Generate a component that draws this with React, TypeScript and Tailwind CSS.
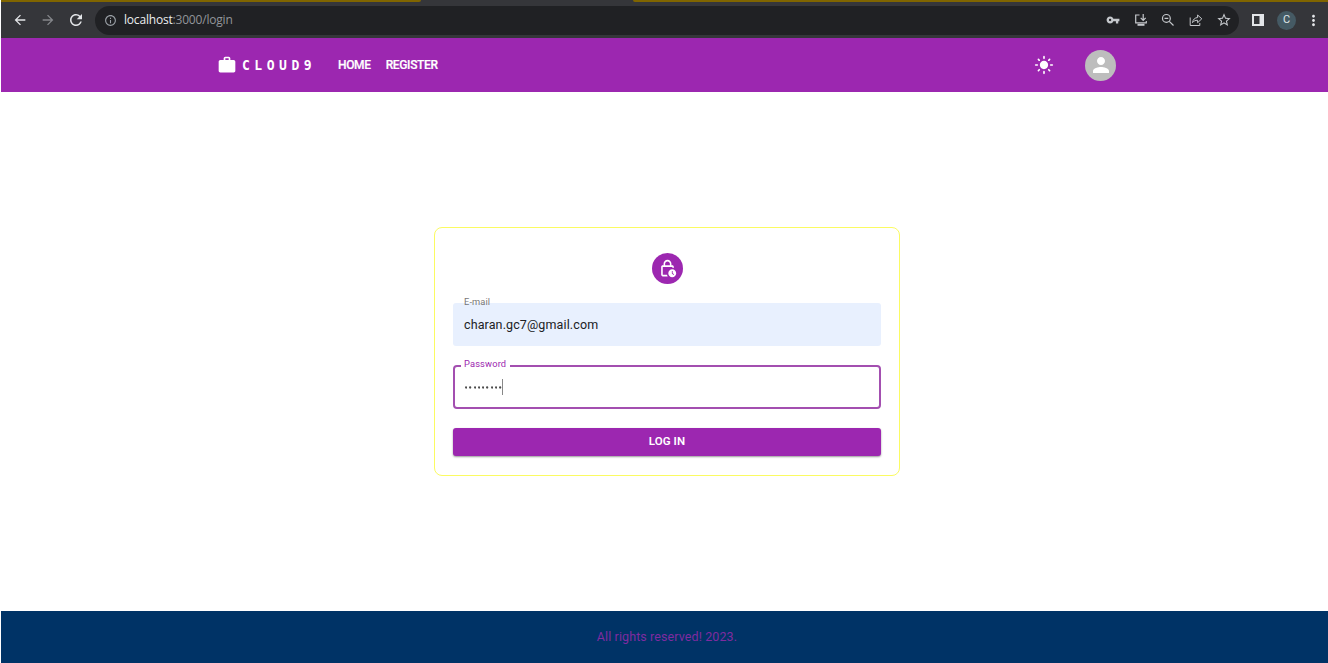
import type { ReactNode } from "react";
import {
  MdArrowBack,
  MdArrowForward,
  MdRefresh,
  MdInfoOutline,
  MdVpnKey,
  MdStarBorder,
  MdMoreVert,
  MdWork,
  MdLightMode,
  MdPerson,
  MdOutlineLockClock,
} from "react-icons/md";

function LineIcon({ children, className }: { children: ReactNode; className: string }) {
  return (
    <svg
      width="14"
      height="14"
      viewBox="0 0 14 14"
      fill="none"
      stroke="currentColor"
      strokeWidth="1.2"
      className={className}
    >
      {children}
    </svg>
  );
}

function TabStrip() {
  return (
    <div className="flex h-[2px] justify-between">
      <div className="w-[420px] rounded-br-[4px] bg-[#806500]" />
      <div className="w-[695px] rounded-bl-[4px] bg-[#806500]" />
    </div>
  );
}

function BrowserBar() {
  return (
    <div className="h-[38px] bg-[#35363a]">
      <TabStrip />
      <div className="flex h-9 items-center text-[#e4e6e9]">
        <MdArrowBack size={16} className="ml-[11px]" />
        <MdArrowForward size={16} className="ml-3 text-[#85878b]" />
        <MdRefresh size={18} className="ml-[11px]" />
        <div className="ml-[10px] flex h-[29px] w-[1144px] items-center rounded-full bg-[#202124] text-[#c5c8cc]">
          <MdInfoOutline size={13} className="ml-[9px] text-[#9aa0a6]" />
          <span className="ml-[7px] font-['Open_Sans',sans-serif] text-[12px] leading-4 tracking-[-0.19px] text-[#92959a]">
            <span className="text-[#eceef0]">localhost</span>:3000/login
          </span>
          <MdVpnKey size={14} className="ml-auto" />
          <LineIcon className="ml-[14px]">
            <path d="M5.5 2H1.7v7.8h10.6V8M9.2 1v6M6.7 4.8l2.5 2.5 2.5-2.5" />
            <path d="M3.5 11.8h7" strokeWidth="2" />
          </LineIcon>
          <LineIcon className="ml-[13px]">
            <circle cx="5.4" cy="5.4" r="3.9" />
            <path d="M8.3 8.3l4.2 4.2M3.5 5.4h3.8" />
          </LineIcon>
          <LineIcon className="ml-[14px]">
            <path d="M1.2 4.5v8h9.6V10" strokeWidth="1" />
            <path d="M3.5 9.6C4 6.4 5.8 4.8 8.6 4.5V2l4.2 3.8-4.2 3.9V7.3C6.3 7.2 4.8 8 3.5 9.6z" strokeWidth="1" />
          </LineIcon>
          <MdStarBorder size={16} className="ml-[13px] mr-[7px]" />
        </div>
        <svg width="12" height="12" viewBox="0 0 12 12" className="ml-[13px]">
          <path d="M0 0h12v12H0zM2 2v8h5.5V2z" fill="currentColor" fillRule="evenodd" />
        </svg>
        <div className="ml-[13px] flex size-[19px] items-center justify-center rounded-full bg-[#455a64] font-[Roboto,sans-serif] text-[11px] text-[#dfe5e8]">
          C
        </div>
        <MdMoreVert size={17} className="ml-[9px]" />
      </div>
    </div>
  );
}

function NavBar() {
  return (
    <header className="flex h-[54px] items-center bg-[#9c27b0] pl-[216px] text-white">
      <MdWork size={20} className="shrink-0" />
      <div className="ml-[5px] w-[96px]">
        <span className="inline-block origin-left scale-x-[0.9] font-['DejaVu_Sans_Mono',monospace] text-[14.5px] font-bold leading-5 tracking-[5px]">
          CLOUD9
        </span>
      </div>
      <nav className="flex gap-[15px] text-[12px] font-medium leading-5 tracking-[-0.35px] [-webkit-text-stroke:0.2px_white]">
        <a>HOME</a>
        <a>REGISTER</a>
      </nav>
      <MdLightMode size={20} className="ml-auto" />
      <div className="ml-[31px] mr-[212px] flex size-[31px] items-center justify-center rounded-full bg-[#bdbdbd]">
        <MdPerson size={24} />
      </div>
    </header>
  );
}

function LoginCard() {
  return (
    <form className="flex h-[249px] w-[466px] flex-col items-center rounded-[8px] border border-[#fbfb62] px-[18px] pt-[25px]">
      <div className="flex size-[31px] shrink-0 items-center justify-center rounded-full bg-[#9c27b0] text-white">
        <MdOutlineLockClock size={19} />
      </div>
      <div className="relative mt-[19px] flex h-[43px] w-full shrink-0 items-center rounded-[3px] bg-[#e8f0fe] px-[11px]">
        <label className="absolute left-[11px] top-[-7px] text-[9.3px] leading-3 tracking-[0.1px] text-[#777]">
          E-mail
        </label>
        <span className="pt-px text-[12.5px] tracking-[0.12px] text-[#202124]">charan.gc7@gmail.com</span>
      </div>
      <div className="relative mt-[19px] flex h-[44px] w-full shrink-0 items-center rounded-[4px] border-2 border-[#a34fb0] px-[10px]">
        <label className="absolute left-[6px] top-[-9px] bg-white pl-[3px] pr-[4px] text-[9.3px] leading-3 tracking-[0.15px] text-[#9c27b0]">
          Password
        </label>
        <div className="flex items-center gap-[2px]">
          {Array.from({ length: 9 }, (_, i) => (
            <svg key={i} width="2.3" height="3" viewBox="0 0 2.3 3">
              <circle cx="1.15" cy="1.5" r="1.15" fill="#4a4a4a" />
            </svg>
          ))}
        </div>
        <span className="h-4 w-px bg-[#888]" />
      </div>
      <button
        type="button"
        className="mt-[19px] h-[28px] w-full shrink-0 rounded-[3px] bg-[#9c27b0] text-[11.5px] font-semibold tracking-[0.1px] text-white shadow-[0_1px_2px_rgba(0,0,0,0.4)]"
      >
        LOG IN
      </button>
    </form>
  );
}

export default function App() {
  return (
    <div className="flex h-[663px] w-[1328px] flex-col overflow-hidden bg-white pl-px font-[Roboto,sans-serif]">
      <BrowserBar />
      <NavBar />
      <main className="flex flex-1 justify-center pl-[5px] pt-[135px]">
        <LoginCard />
      </main>
      <footer className="flex h-[52px] items-center justify-center bg-[#003366] pl-[5px] pt-px text-[12.5px] tracking-[0.1px] text-[#7f2ba0]">
        All rights reserved! 2023.
      </footer>
    </div>
  );
}
